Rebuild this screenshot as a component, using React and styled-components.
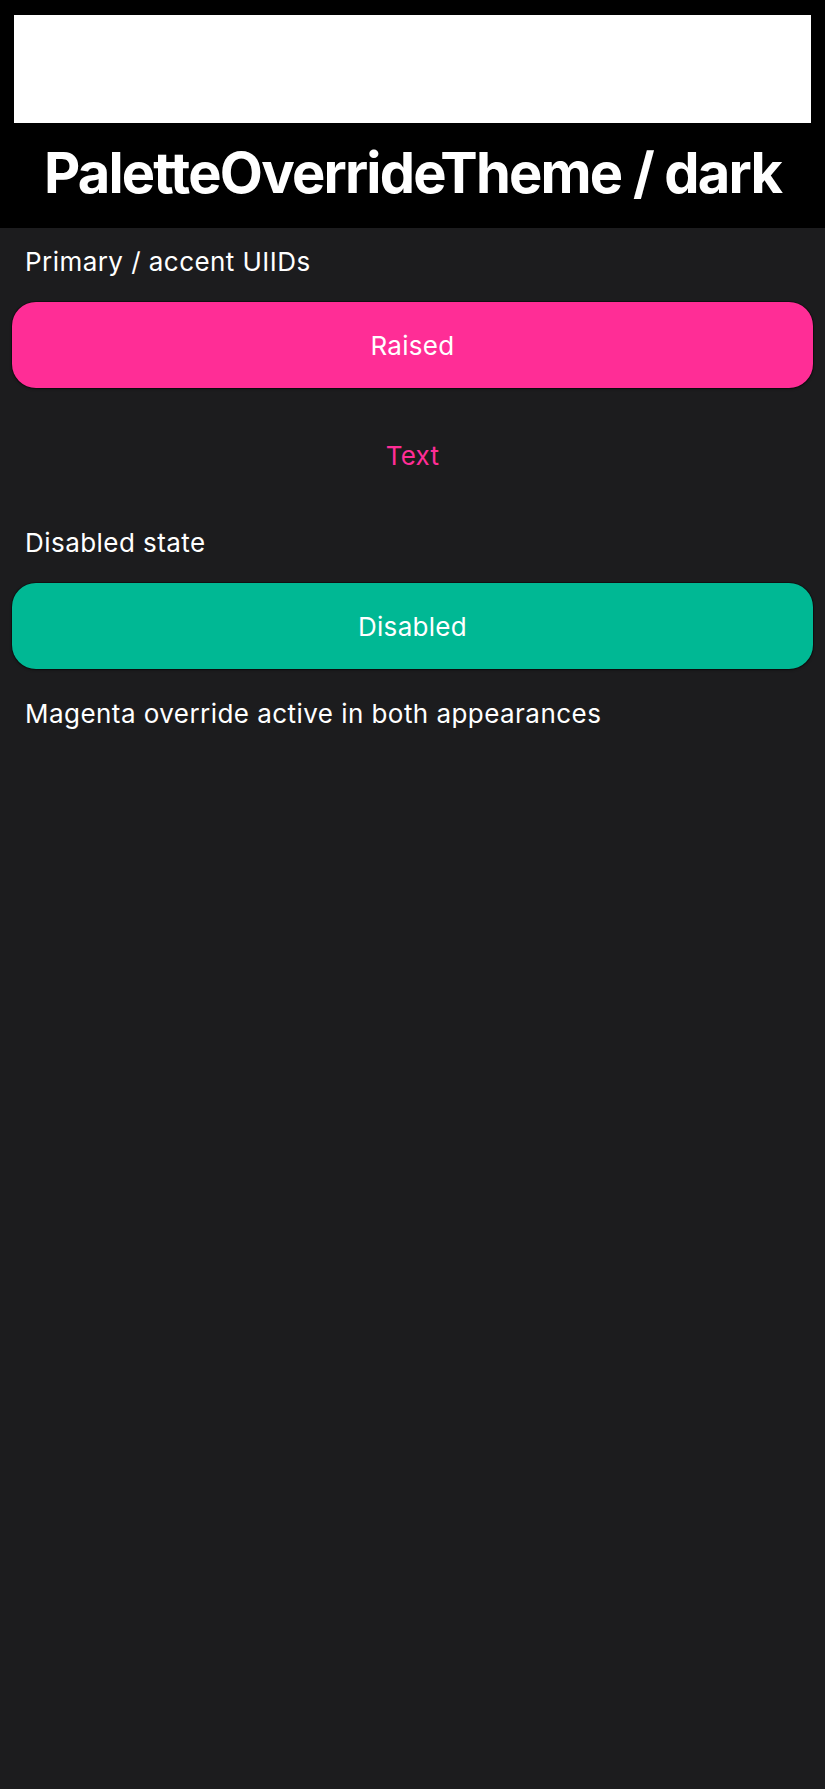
import React from 'react'
import styled, { createGlobalStyle } from 'styled-components'

const GlobalStyle = createGlobalStyle`
  html, body {
    margin: 0;
    padding: 0;
    background: #1c1c1e;
  }
  body {
    font-family: Inter, "Noto Sans", sans-serif;
    -webkit-font-smoothing: antialiased;
  }
`

const Screen = styled.div`
  min-height: 100vh;
  background: #1c1c1e;
  display: flex;
  flex-direction: column;
`

const Header = styled.header`
  background: #000000;
  padding: 15px 14px 0 14px;
  height: 228px;
  box-sizing: border-box;
  display: flex;
  flex-direction: column;
`

const Banner = styled.div`
  height: 108px;
  background: #ffffff;
`

const Title = styled.h1`
  margin: 0;
  flex: 1;
  display: flex;
  align-items: center;
  justify-content: center;
  padding-bottom: 6px;
  color: #ffffff;
  font-size: 56px;
  font-weight: 700;
  letter-spacing: -1.8px;
  white-space: nowrap;
`

const Content = styled.main`
  display: flex;
  flex-direction: column;
  gap: 24px;
  padding: 18px 12px 0 12px;
`

const Label = styled.div`
  padding: 0 13px;
  margin-top: ${p => p.$push || 0}px;
  color: #ffffff;
  font-size: 26px;
  line-height: 32px;
  letter-spacing: 0.45px;
`

const Button = styled.button`
  height: 86px;
  border: none;
  border-radius: 24px;
  font-family: inherit;
  font-size: 26px;
  letter-spacing: 0.3px;
  color: ${p => p.$fg || '#ffffff'};
  background: ${p => p.$bg || 'transparent'};
  box-shadow: ${p => (p.$bg ? '0 0 0 1px rgba(0,0,0,0.35), 0 1px 3px rgba(0,0,0,0.45)' : 'none')};
  cursor: pointer;
`

export default function App() {
  return (
    <Screen>
      <GlobalStyle />
      <Header>
        <Banner />
        <Title>PaletteOverrideTheme / dark</Title>
      </Header>
      <Content>
        <Label>Primary / accent UIIDs</Label>
        <Button $bg="#ff2d96">Raised</Button>
        <Button $fg="#ff2d96">Text</Button>
        <Label $push={5}>Disabled state</Label>
        <Button $bg="#00b894" disabled>Disabled</Button>
        <Label $push={5}>Magenta override active in both appearances</Label>
      </Content>
    </Screen>
  )
}
